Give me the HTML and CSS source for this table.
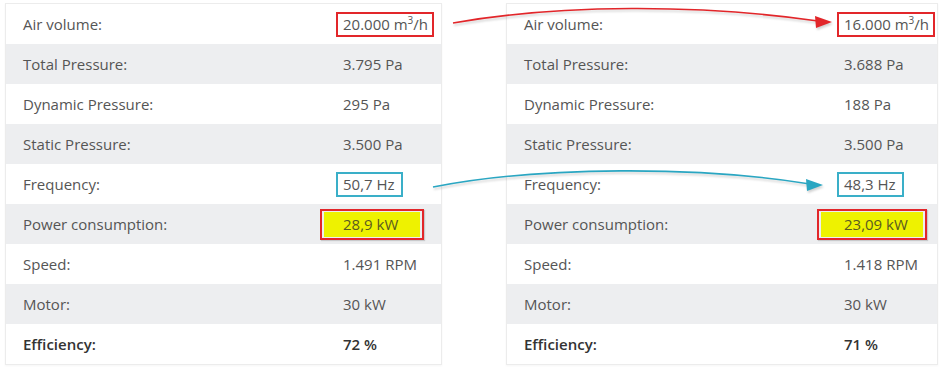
FILE: index.html
```html
<!DOCTYPE html>
<html>
<head>
<meta charset="utf-8">
<link rel="stylesheet" href="styles.css">
</head>
<body>
<div class="page">
  <div class="table left">
    <div class="row"><span class="label">Air volume:</span><span class="value"><span class="box red">20.000 m<sup>3</sup>/h</span></span></div>
    <div class="row alt"><span class="label">Total Pressure:</span><span class="value">3.795 Pa</span></div>
    <div class="row"><span class="label">Dynamic Pressure:</span><span class="value">295 Pa</span></div>
    <div class="row alt"><span class="label">Static Pressure:</span><span class="value">3.500 Pa</span></div>
    <div class="row"><span class="label">Frequency:</span><span class="value"><span class="box cyan">50,7 Hz</span></span></div>
    <div class="row alt"><span class="label">Power consumption:</span><span class="value"><span class="box power p-left"><span class="hl">28,9 kW</span></span></span></div>
    <div class="row"><span class="label">Speed:</span><span class="value">1.491 RPM</span></div>
    <div class="row alt"><span class="label">Motor:</span><span class="value">30 kW</span></div>
    <div class="row bold"><span class="label">Efficiency:</span><span class="value">72 %</span></div>
  </div>
  <div class="table right">
    <div class="row"><span class="label">Air volume:</span><span class="value"><span class="box red">16.000 m<sup>3</sup>/h</span></span></div>
    <div class="row alt"><span class="label">Total Pressure:</span><span class="value">3.688 Pa</span></div>
    <div class="row"><span class="label">Dynamic Pressure:</span><span class="value">188 Pa</span></div>
    <div class="row alt"><span class="label">Static Pressure:</span><span class="value">3.500 Pa</span></div>
    <div class="row"><span class="label">Frequency:</span><span class="value"><span class="box cyan">48,3 Hz</span></span></div>
    <div class="row alt"><span class="label">Power consumption:</span><span class="value"><span class="box power p-right"><span class="hl">23,09 kW</span></span></span></div>
    <div class="row"><span class="label">Speed:</span><span class="value">1.418 RPM</span></div>
    <div class="row alt"><span class="label">Motor:</span><span class="value">30 kW</span></div>
    <div class="row bold"><span class="label">Efficiency:</span><span class="value">71 %</span></div>
  </div>
  <svg class="arrows" width="950" height="372" viewBox="0 0 950 372">
    <g class="arrow-red">
      <path d="M453 23 C 560 4, 700 4, 818 21" fill="none" stroke="#e2262a" stroke-width="1.6"/>
      <polygon points="832,22 815,16 816,28" fill="#e2262a"/>
    </g>
    <g class="arrow-cyan">
      <path d="M433 187 C 540 166, 700 166, 810 184" fill="none" stroke="#2aa6c2" stroke-width="1.6"/>
      <polygon points="823,185 806,179 807,191" fill="#2aa6c2"/>
    </g>
  </svg>
</div>
</body>
</html>
```

FILE: styles.css
```css
html, body {
  margin: 0;
  padding: 0;
  background: #ffffff;
}

.page {
  position: relative;
  width: 950px;
  height: 372px;
  display: flex;
  align-items: flex-start;
  gap: 64px;
  padding: 3px 0 0 5px;
  box-sizing: border-box;
  font-family: "Open Sans", "Liberation Sans", sans-serif;
  font-size: 15px;
  color: #555555;
}

.table {
  box-sizing: border-box;
  display: flex;
  flex-direction: column;
  border: 1px solid #ececec;
  box-shadow: 0 1px 2px rgba(0, 0, 0, 0.04);
  background: #ffffff;
}

.table.left { width: 437px; }
.table.right { width: 432px; }

.row {
  display: grid;
  grid-template-columns: 337px 1fr;
  align-items: center;
  height: 40px;
  background: #ffffff;
}

.row.alt {
  background: #edeef0;
}

.label {
  padding-left: 17px;
  white-space: nowrap;
}

.value {
  white-space: nowrap;
}

.row.bold {
  font-weight: 600;
  color: #333333;
}

.box {
  display: inline-block;
  line-height: 21px;
}

.box sup {
  font-size: 10px;
  line-height: 0;
  vertical-align: 6px;
}

.box.red {
  border: 2px solid #e2262a;
  padding: 0 4px 0 5px;
  margin-left: -7px;
}

.box.cyan {
  border: 2px solid #3aafc8;
  padding: 0 6px 0 5px;
  margin-left: -7px;
}

.box.power {
  border: 2px solid #e2262a;
  padding: 1px 2px;
  box-shadow: 1px 1px 1px rgba(0, 0, 0, 0.15);
  margin-left: -23px;
}

.box.power.p-right {
  margin-left: -27px;
}

.hl {
  display: inline-block;
  background: #eef200;
  color: #5a5a20;
  padding: 2px 22px 2px 19px;
}

.p-right .hl {
  padding: 2px 15px 2px 23px;
}

.arrows {
  position: absolute;
  top: 0;
  left: 0;
  pointer-events: none;
  filter: drop-shadow(1px 2px 1px rgba(0, 0, 0, 0.18));
}
```
